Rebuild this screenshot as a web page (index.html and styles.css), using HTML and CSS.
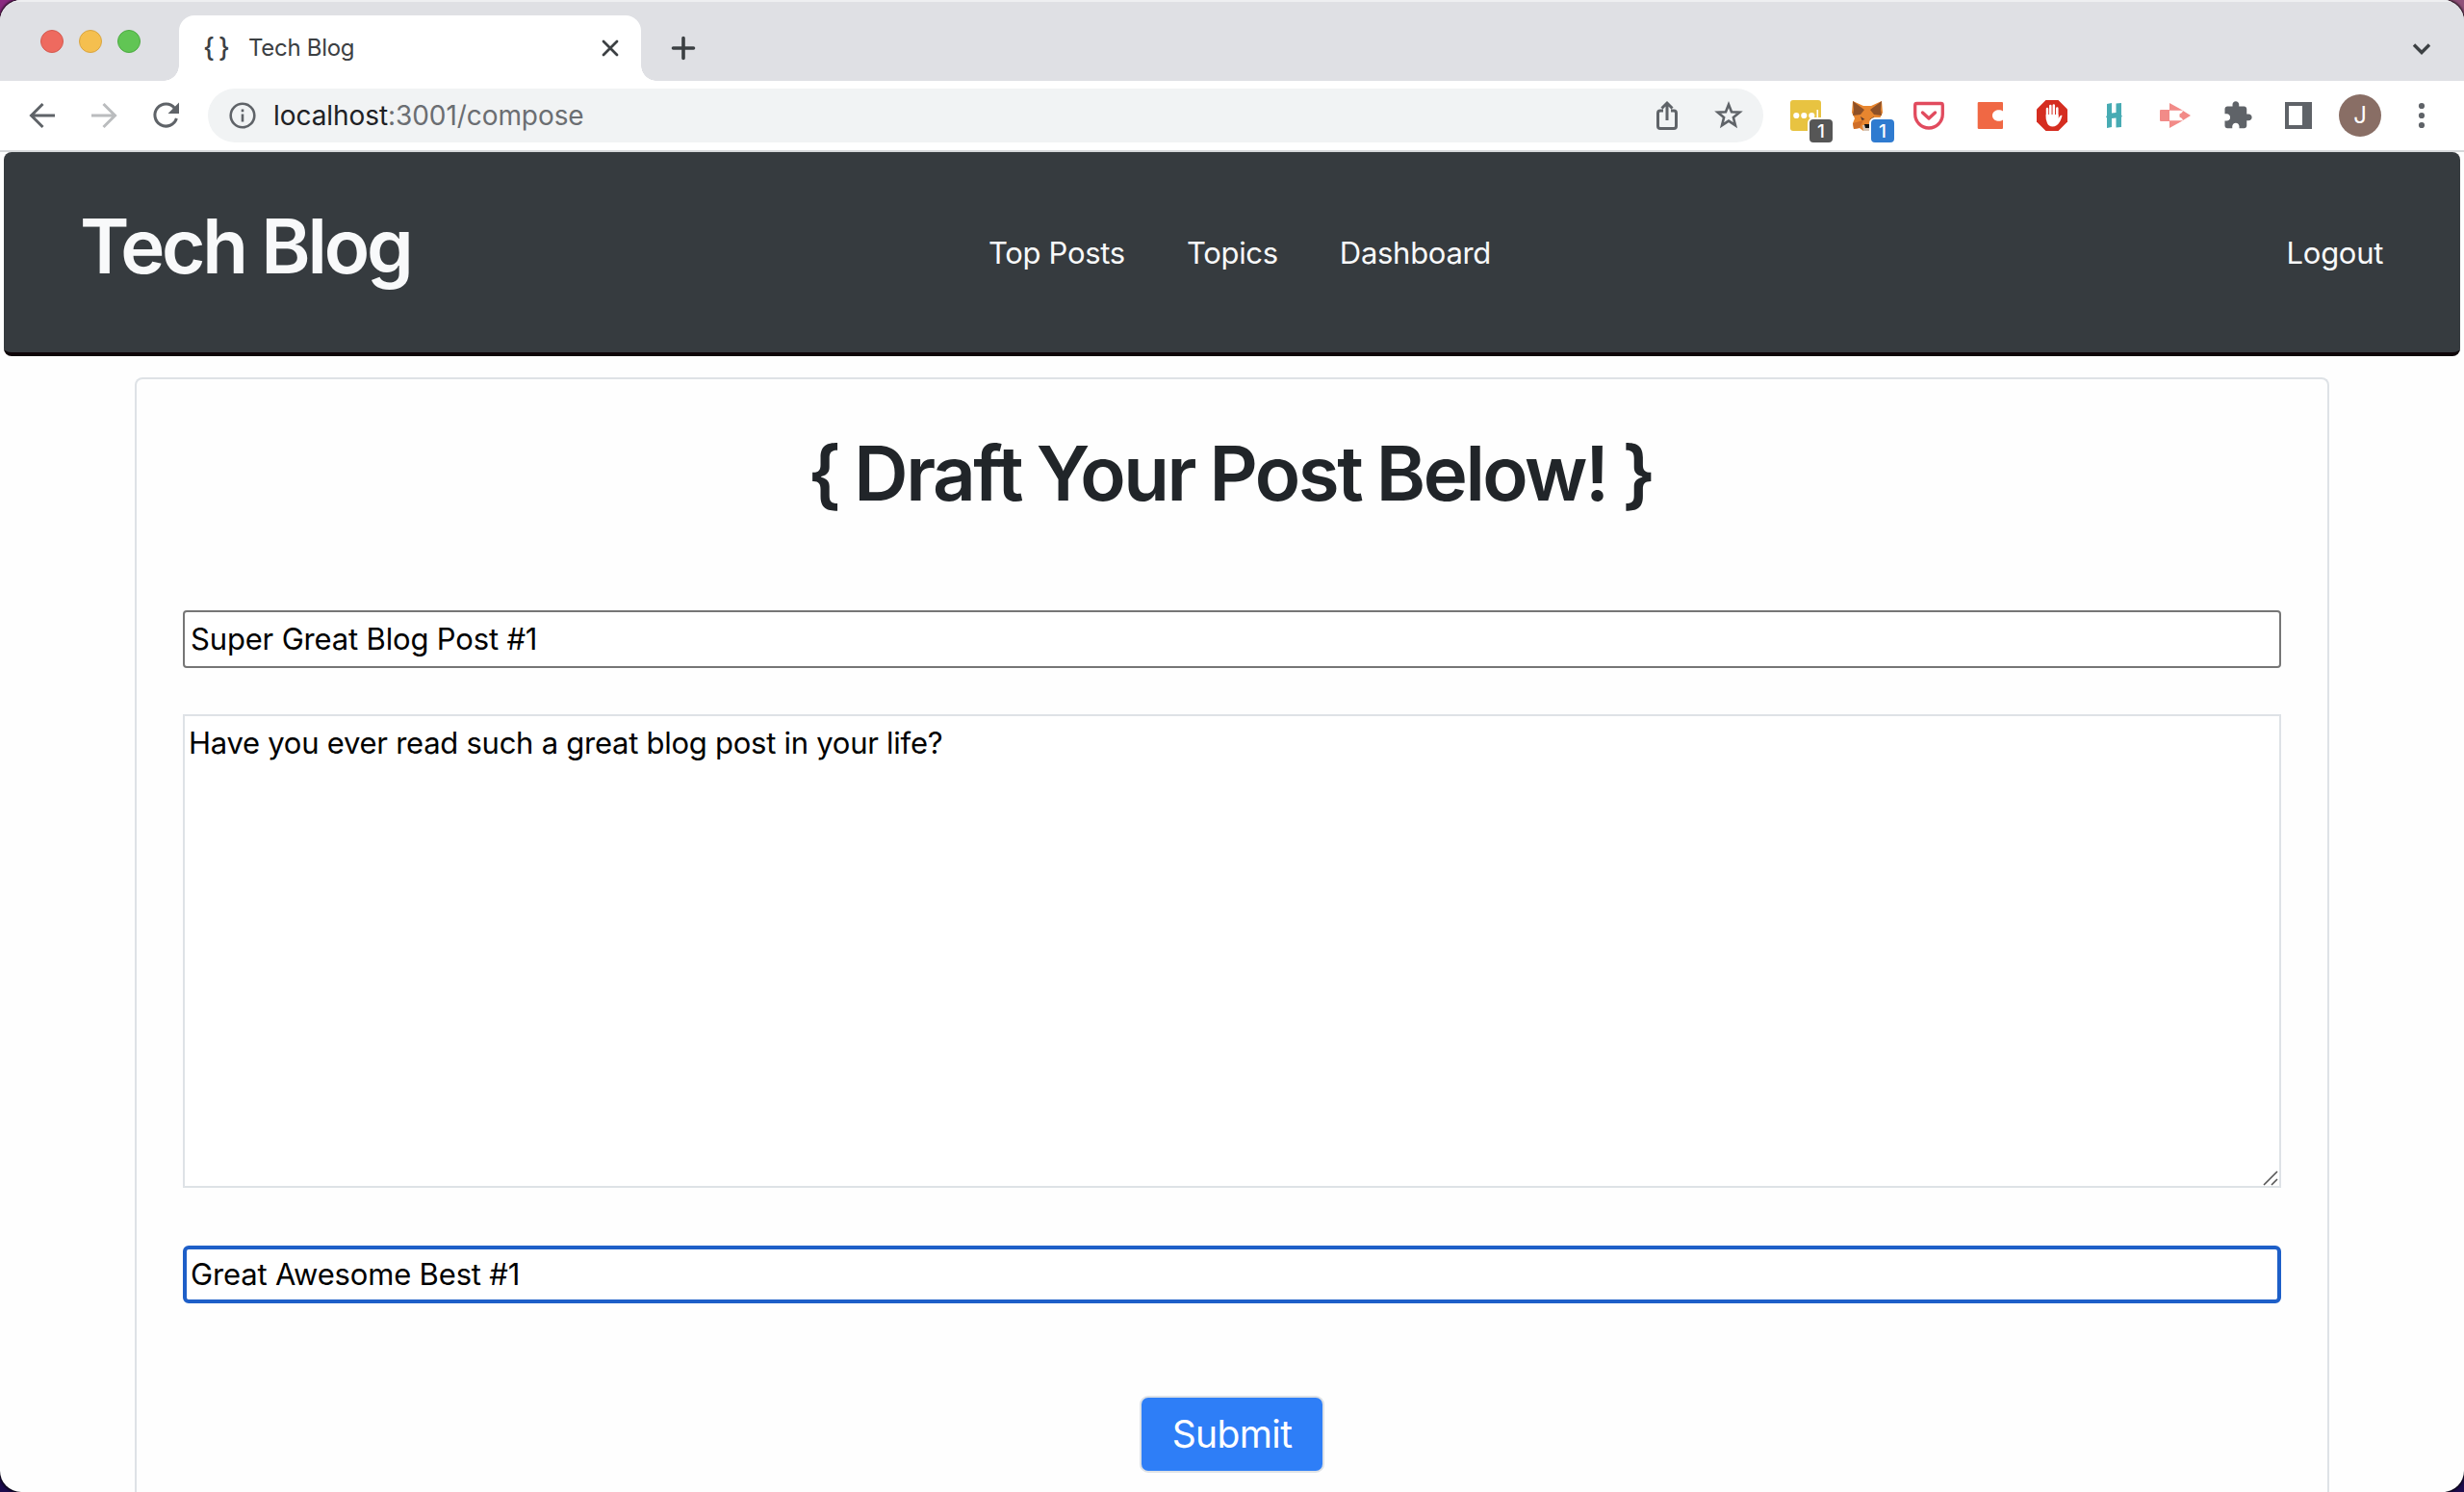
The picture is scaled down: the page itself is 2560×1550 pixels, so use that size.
FILE: index.html
```html
<!DOCTYPE html>
<html lang="en">
<head>
<meta charset="utf-8">
<title>Tech Blog</title>
<link rel="stylesheet" href="styles.css">
</head>
<body>
<div class="window">
  <header class="tabstrip">
    <div class="lights"><i class="light red"></i><i class="light yellow"></i><i class="light green"></i></div>
    <div class="tab">
      <span class="favicon">{}</span>
      <span class="tab-title">Tech Blog</span>
      <svg class="tab-close" viewBox="0 0 20 20"><path d="M3 3L17 17M17 3L3 17"/></svg>
    </div>
    <svg class="new-tab" viewBox="0 0 28 28"><path d="M14 3.500V24.500M3.500 14H24.500"/></svg>
    <svg class="tab-menu" viewBox="0 0 24 24"><path d="M4 7.500L12 15.500L20 7.500"/></svg>
  </header>

  <div class="toolbar">
    <svg class="cell line" viewBox="0 0 64 64"><path d="M45 32H21M32.500 20L20.500 32L32.500 44"/></svg>
    <svg class="cell line faded" viewBox="0 0 64 64"><path d="M19 32H43M31.500 20L43.500 32L31.500 44"/></svg>
    <svg class="cell line" viewBox="0 0 64 64"><path d="M41.500 24.500A11.500 11.500 0 1 0 43.400 35"/><path class="solid" d="M46 18.500V30H34.500Z"/></svg>
    <div class="omnibox">
      <svg class="info" viewBox="0 0 32 32"><circle cx="16" cy="16" r="12.300"/><path d="M16 14.500V22.500M16 9.500V12.300"/></svg>
      <span class="url"><span class="host">localhost</span>:3001/compose</span>
      <svg class="cell line" viewBox="0 0 64 64"><path d="M28 27H25Q22.500 27 22.500 29.500V43Q22.500 45.500 25 45.500H39Q41.500 45.500 41.500 43V29.500Q41.500 27 39 27H36M32 37V20M26.500 24.500L32 19L37.500 24.500"/></svg>
      <svg class="cell line" viewBox="0 0 64 64"><path d="M32 20.500L35 28.200L43.400 28.700L36.900 34L39 42.200L32 37.600L25 42.200L27.100 34L20.600 28.700L29 28.200Z" stroke-width="2.600"/></svg>
    </div>
    <div class="ext">
      <svg class="cell" viewBox="0 0 64 64"><rect x="16" y="16" width="32" height="32" rx="3" fill="#e8c341"/><g fill="#fff"><circle cx="22.300" cy="32" r="3.100"/><circle cx="30.300" cy="32" r="3.100"/><circle cx="38.300" cy="32" r="3.100"/><rect x="43.500" y="26" width="1.600" height="12"/></g></svg>
      <span class="badge gray">1</span>
    </div>
    <div class="ext">
      <svg class="cell" viewBox="0 0 64 64">
        <path fill="#e8862f" d="M17 17L28 22H36L47 17L48 29L45 35L46 44L40 46L36 48H28L24 45L18 46L17 40L19 35L16 29Z"/>
        <path fill="#8e5128" d="M17 17L29 26L25 31L17 32L18 26ZM47 17L35 26L39 31L47 32L46 26Z"/>
        <path fill="#cf6e28" d="M17 40L28 37L24 45L18 46Z"/>
        <path fill="#5c3a2a" d="M25 33L29.500 36L26.500 37ZM39 33L34.500 36L37.500 37Z"/>
        <path fill="#d8c6b7" d="M27 42H37L36 48H28Z"/><path fill="#111" d="M29 41H35L34 45H30Z"/>
      </svg>
      <span class="badge blue">1</span>
    </div>
    <svg class="cell" viewBox="0 0 64 64"><path d="M19.500 19.500H44.500Q46.300 19.500 46.300 21.300V30.500A14.300 14.500 0 0 1 17.700 30.500V21.300Q17.700 19.500 19.500 19.500Z" fill="none" stroke="#e14b5e" stroke-width="3.300"/><path d="M25.500 29L32 35L38.500 29" fill="none" stroke="#e14b5e" stroke-width="3.400" stroke-linecap="round" stroke-linejoin="round"/></svg>
    <svg class="cell" viewBox="0 0 64 64"><path fill="#f06844" d="M20 18H44Q45 18 45 19V27.500C42 25 34 26 34 32S42 39 45 36.500V45Q45 46 44 46H20Q18.700 46 18.700 45V19Q18.700 18 20 18Z"/></svg>
    <svg class="cell" viewBox="0 0 64 64"><path fill="#d52d20" d="M25.500 16H38.500L48 25.500V38.500L38.500 48H25.500L16 38.500V25.500Z"/><path d="M27 36V25M30.300 33V22M33.800 33V21.500M37.300 34V24.500" fill="none" stroke="#fff" stroke-width="2.500" stroke-linecap="round"/><path fill="#fff" d="M25.700 31H38.500V35C39.500 33.500 41 31 42.500 32C41.500 36 39 43.500 32.500 43.500C27 43.500 25.700 38 25.700 31Z"/></svg>
    <svg class="cell" viewBox="0 0 64 64"><path fill="#47abb3" d="M25 20L30 19V29.500L34.500 29V19.500L40 19V31.500L41 33L40 33.500V44L34.500 44.500V34.500L30 35V44L25 45V34.500L24 33.500L25 32Z"/></svg>
    <svg class="cell" viewBox="0 0 64 64"><path fill="#f28b88" d="M17 26H26V38H17Q16 38 16 37V27Q16 26 17 26ZM26 19L40 26.700H26ZM26 37.300H40L26 45ZM40 27L48 32L40 37L39 35L36.500 33.500V30.500L39 29Z"/></svg>
    <svg class="cell" viewBox="0 0 64 64"><path fill="#5f6368" transform="translate(16.800 15.800) scale(1.340)" d="M20.500 11H19V7c0-1.100-.9-2-2-2h-4V3.500C13 2.120 11.880 1 10.500 1S8 2.120 8 3.500V5H4c-1.100 0-1.990.9-1.990 2v3.800H3.500c1.490 0 2.700 1.210 2.700 2.700s-1.210 2.700-2.700 2.700H2V20c0 1.100.9 2 2 2h3.800v-1.500c0-1.490 1.210-2.700 2.700-2.700 1.490 0 2.700 1.210 2.700 2.700V22H17c1.100 0 2-.9 2-2v-4h1.500c1.380 0 2.500-1.120 2.500-2.500S21.880 11 20.500 11z"/></svg>
    <svg class="cell" viewBox="0 0 64 64"><path fill="#5f6368" fill-rule="evenodd" d="M18 18H46V46H18ZM22 22V42H36V22Z"/></svg>
    <div class="cell profile"><span class="avatar">J</span></div>
    <svg class="cell" viewBox="0 0 64 64" fill="#5f6368"><circle cx="32" cy="22" r="3.100"/><circle cx="32" cy="32" r="3.100"/><circle cx="32" cy="42" r="3.100"/></svg>
  </div>

  <main class="page">
    <nav class="navbar">
      <a class="brand">Tech Blog</a>
      <div class="links"><a>Top Posts</a><a>Topics</a><a>Dashboard</a></div>
      <a class="logout">Logout</a>
    </nav>
    <form class="card">
      <h1 class="title">{ Draft Your Post Below! }</h1>
      <input class="field" value="Super Great Blog Post #1">
      <div class="area">
        <textarea class="body-text">Have you ever read such a great blog post in your life?</textarea>
        <svg class="grip" viewBox="0 0 16 16"><path d="M1 15L15 1M9 15L15 9"/></svg>
      </div>
      <input class="field focused" value="Great Awesome Best #1">
      <button class="submit" type="button">Submit</button>
    </form>
  </main>
</div>
</body>
</html>
```
FILE: styles.css
```css
* { box-sizing: border-box; }
body {
  margin: 0;
  height: 1550px;
  overflow: hidden;
  font-family: Inter, "Liberation Sans", sans-serif;
  background: linear-gradient(to bottom, transparent 50%, #1c0b4d 50%), linear-gradient(to right, #8a2a80 50%, #8f5078 50%);
}
.window {
  height: 1550px;
  display: flex;
  flex-direction: column;
  border-radius: 22px;
  overflow: hidden;
  background: #fefefe;
  box-shadow: 0 0 3px 1px #000;
}
.tabstrip {
  height: 84px;
  display: flex;
  align-items: flex-start;
  background: #dfe0e4;
  border-top: 2px solid #eeeff1;
}
.lights { display: flex; gap: 16px; padding: 29px 0 0 42px; width: 186px; }
.light { width: 24px; height: 24px; border-radius: 50%; border: 1px solid; }
.red { background: #ee6a5f; border-color: #d45a50; }
.yellow { background: #f5bf4f; border-color: #d9a541; }
.green { background: #61c554; border-color: #4dab42; }
.tab {
  position: relative;
  width: 480px;
  height: 68px;
  margin-top: 14px;
  padding: 0 22px 0 25px;
  display: flex;
  align-items: center;
  border-radius: 16px 16px 0 0;
  background: #fff;
  color: #3c4043;
}
.tab::before, .tab::after {
  content: "";
  position: absolute;
  bottom: 0;
  width: 16px;
  height: 16px;
}
.tab::before { left: -16px; background: radial-gradient(circle at 0 0, transparent 15.500px, #fff 16px); }
.tab::after { right: -16px; background: radial-gradient(circle at 100% 0, transparent 15.500px, #fff 16px); }
.favicon { width: 47px; padding-bottom: 2px; font-size: 27px; font-weight: 550; letter-spacing: 4px; white-space: nowrap; }
.tab-title { flex: 1; padding-bottom: 2px; font-size: 24px; letter-spacing: -0.300px; }
.tab-close { width: 20px; height: 20px; fill: none; stroke: #3c4043; stroke-width: 2.800; stroke-linecap: round; }
.new-tab { width: 28px; height: 28px; margin: 34px 0 0 30px; fill: none; stroke: #3c4043; stroke-width: 3.600; stroke-linecap: round; }
.tab-menu { width: 24px; height: 24px; margin: 37px 32px 0 auto; fill: none; stroke: #3c4043; stroke-width: 3.400; }
.toolbar {
  height: 74px;
  display: flex;
  align-items: center;
  padding: 0 12px;
  background: #fff;
  border-bottom: 2px solid #d6d8da;
}
.cell { width: 64px; height: 64px; flex: none; }
.line { fill: none; stroke: #5f6368; stroke-width: 3; }
.line .solid { fill: #5f6368; stroke: none; }
.faded { stroke: #babcbe; }
.omnibox {
  width: 1616px;
  height: 56px;
  margin: 0 12px;
  padding: 0 4px 0 20px;
  display: flex;
  align-items: center;
  border-radius: 28px;
  background: #f1f3f4;
}
.info { width: 32px; height: 32px; fill: none; stroke: #5f6368; stroke-width: 2.600; }
.url { flex: 1; margin-left: 16px; font-size: 28px; letter-spacing: -0.070px; color: #6b6e72; white-space: nowrap; }
.host { color: #202124; }
.ext { position: relative; width: 64px; height: 64px; flex: none; }
.badge {
  position: absolute;
  left: 34px;
  top: 34px;
  width: 28px;
  height: 28px;
  border: 2px solid #fff;
  border-radius: 6px;
  color: #fff;
  font: 500 19px/26px Inter, sans-serif;
  text-align: center;
}
.gray { background: #565656; }
.blue { background: #2f7bd0; }
.profile { display: grid; place-items: center; }
.avatar {
  width: 44px;
  height: 44px;
  border-radius: 50%;
  background: #896e65;
  color: #fff;
  font-size: 24px;
  line-height: 44px;
  text-align: center;
}
.page { flex: 1; display: flex; flex-direction: column; padding: 0 4px; }
.navbar {
  height: 212px;
  display: grid;
  grid-template-columns: 1fr auto 1fr;
  padding: 0 80px;
  border-radius: 8px;
  border-bottom: 4px solid #0e0508;
  background: #363b3f;
  color: #f8f9fa;
  font-size: 31px;
  font-weight: 430;
  letter-spacing: -0.300px;
}
.brand { margin-left: -1px; padding-top: 48px; font-size: 78px; line-height: 100px; font-weight: 570; letter-spacing: -3.200px; }
.links { display: flex; gap: 64px; padding: 85px 0 0 16px; line-height: 40px; }
.logout { justify-self: end; padding-top: 85px; line-height: 40px; }
.card {
  flex: 1;
  display: flex;
  flex-direction: column;
  margin: 22px 136px 0;
  padding: 0 48px;
  border: 2px solid #dee2e6;
  border-bottom: 0;
  border-radius: 8px 8px 0 0;
}
.title {
  margin: 48px 0 92px;
  color: #212529;
  font-size: 78px;
  line-height: 100px;
  font-weight: 590;
  letter-spacing: -2.500px;
  word-spacing: -1.500px;
  text-indent: -3px;
  text-align: center;
  white-space: nowrap;
}
.field {
  width: 100%;
  height: 60px;
  flex: none;
  padding: 0 6px 1px;
  border: 2px solid #767676;
  border-radius: 4px;
  background: #fff;
  color: #000;
  font: 31px Inter, sans-serif;
  letter-spacing: -0.170px;
  outline: none;
}
.area { position: relative; height: 492px; margin: 48px 0 60px; }
.body-text {
  display: block;
  width: 100%;
  height: 492px;
  padding: 9px 4px;
  border: 2px solid #dee2e6;
  background: #fff;
  color: #000;
  font: 31px/38px Inter, sans-serif;
  letter-spacing: -0.260px;
  resize: none;
  outline: none;
}
.grip { position: absolute; right: 3px; bottom: 2px; width: 16px; height: 16px; fill: none; stroke: #555; stroke-width: 1.600; }
.focused { border: 4px solid #1e5fc8; border-radius: 6px; padding: 0 4px 1px; }
.submit {
  align-self: center;
  flex: none;
  width: 192px;
  height: 80px;
  margin-top: 96px;
  padding: 0 0 2px;
  border: 2px solid #dee2e6;
  border-radius: 9px;
  background: #2e7ef7;
  color: #fff;
  font: 39px Inter, sans-serif;
  letter-spacing: -0.600px;
}
```
